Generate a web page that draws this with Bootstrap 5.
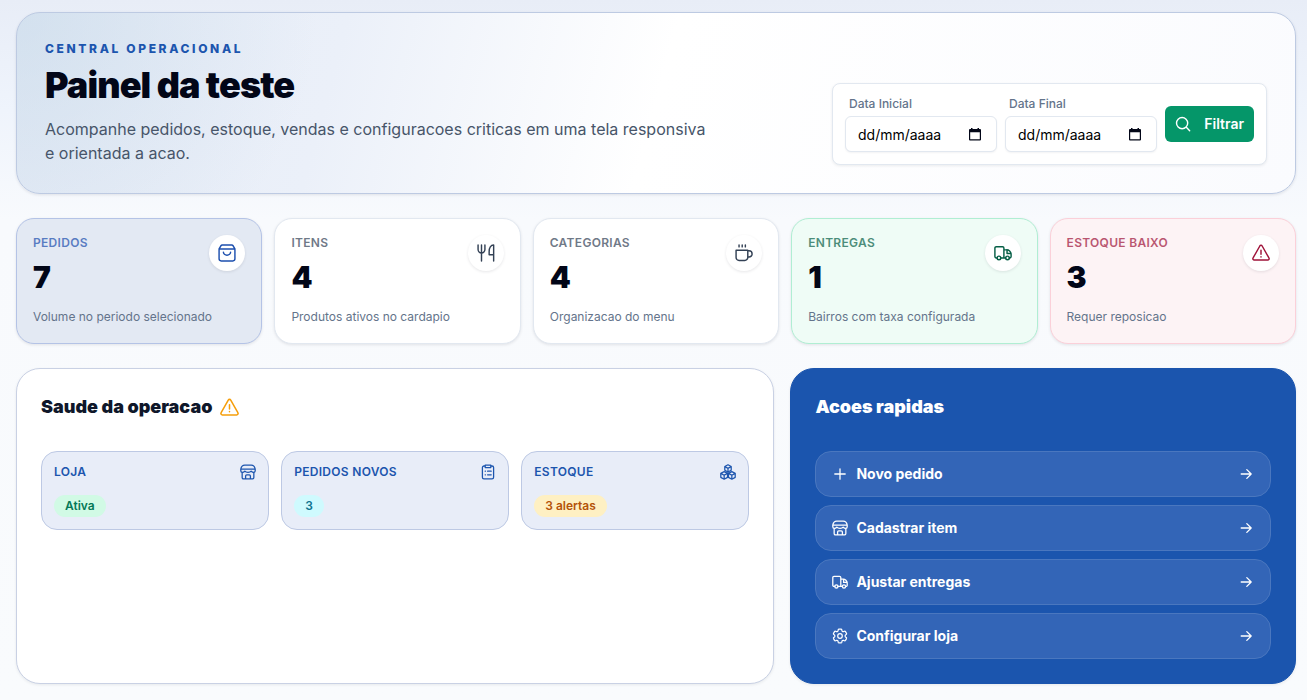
<!DOCTYPE html>
<html lang="pt-BR">
<head>
<meta charset="utf-8">
<meta name="viewport" content="width=device-width, initial-scale=1">
<title>Painel da teste</title>
<link href="https://cdn.jsdelivr.net/npm/bootstrap@5.3.0/dist/css/bootstrap.min.css" rel="stylesheet">
<style>
  body { font-family: Inter, "Liberation Sans", sans-serif; color: #020617; min-height: 100vh;
    background: #f9fbfd linear-gradient(#e8edf7 0, #eff4fc 110px, #f8fafd 220px, #f9fbfd 100%) no-repeat; }
  .page { padding: 12px 11px 16px 16px; }
  .ico { fill: none; stroke: currentColor; stroke-width: 1.6; stroke-linecap: round; stroke-linejoin: round; flex: none; }
  .hero { border: 1px solid #bdcae2; border-radius: 24px; padding: 28px;
    background: radial-gradient(circle at 0 0, rgba(196,216,232,.55), rgba(196,216,232,0) 300px),
      linear-gradient(105deg, #e5ebf6 0, #ebf0f9 25%, #fff 50%, #fafbfe 100%);
    box-shadow: 0 1px 3px rgba(15,23,42,.1); }
  .eyebrow { font-size: 12px; line-height: 16px; font-weight: 800; letter-spacing: .22em; color: #1c55ae; }
  .hero-title { font-size: 36px; line-height: 40px; font-weight: 900; letter-spacing: -.025em; }
  .hero-text { font-size: 16px; line-height: 24px; color: #475569; max-width: 672px; margin-top: 12px; }
  .filter { background: #fff; border: 1px solid #e2e8f0; border-radius: 8px; padding: 12px; box-shadow: 0 1px 3px rgba(15,23,42,.08); }
  .filter label { font-size: 12px; line-height: 16px; color: #64748b; font-weight: 500; padding-left: 4px; }
  .date-box { width: 152px; }
  .date-box .form-control { height: 36px; font-size: 14px; line-height: 20px; padding: 0 12px; border: 1px solid #e2e8f0; border-radius: 6px; box-shadow: 0 1px 2px rgba(15,23,42,.05); }
  .date-box .form-control::placeholder { color: #000; opacity: 1; }
  .date-box svg { right: 16px; top: 12px; pointer-events: none; }
  .btn-filter { height: 36px; width: 89px; padding: 0 10px; border-radius: 6px; font-size: 14px; line-height: 20px; font-weight: 600; color: #fff; background: #059669; }
  .btn-filter:hover { background: #047857; color: #fff; }
  .stats { --bs-gutter-x: 12px; --bs-gutter-y: 12px; }
  .stat { border: 1px solid #e2e8f0; border-radius: 18px; padding: 16px 16px 18px; height: 126px; background: #fff; box-shadow: 0 1px 3px rgba(15,23,42,.1); color: #334155; }
  .stat-name { font-size: 12px; line-height: 16px; font-weight: 600; letter-spacing: .025em; opacity: .7; }
  .stat-value { font-size: 30px; line-height: 36px; font-weight: 900; color: #020617; }
  .stat-note { font-size: 12px; line-height: 16px; color: #64748b; }
  .stat-icon { width: 36px; height: 36px; border-radius: 50%; background: #fff; box-shadow: 0 1px 3px rgba(15,23,42,.1); }
  .stat-blue { background: #e3e9f3; border-color: #b4c3e6; color: #1c4fae; }
  .stat-green { background: #effcf6; border-color: #b0eed3; color: #065f46; }
  .stat-red { background: #fdf3f5; border-color: #fbd0d9; color: #9f1239; }
  .panels { display: grid; grid-template-columns: 3fr 2fr; gap: 16px; }
  .panel { border: 1px solid #c9d1e4; border-radius: 24px; padding: 24px; background: #fff; box-shadow: 0 1px 3px rgba(15,23,42,.08); }
  .panel h2 { font-size: 18px; line-height: 28px; font-weight: 900; margin-bottom: 30px; color: #0f172a; }
  .panel-blue { background: #1b55ae; border-color: #1b55ae; }
  .panel-blue h2 { color: #fff; }
  .health { display: grid; grid-template-columns: repeat(3, 1fr); gap: 12px; color: #1c55ae; }
  .tile { border: 1px solid #bdc9e4; border-radius: 16px; padding: 12px; background: #e8edf8; }
  .tile-name { font-size: 12px; line-height: 16px; font-weight: 600; letter-spacing: .025em; }
  .tile-state { display: flex; margin-top: 15px; }
  .pill { border-radius: 11px; padding: 3px 11px; font-size: 12px; line-height: 16px; font-weight: 600; }
  .pill-green { background: #d1fae5; color: #047857; }
  .pill-cyan { background: #cffafe; color: #0e7490; }
  .pill-amber { background: #fef0c3; color: #b45309; }
  .action { height: 46px; border: 1px solid #4a77bf; border-radius: 16px; padding: 0 16px; background: #3365b7; color: #fff; font-size: 14px; line-height: 20px; font-weight: 700; text-decoration: none; }
  .action:hover { background: #4071c0; }
  @media (max-width: 991px) { .panels, .health { grid-template-columns: 1fr; } }
</style>
</head>
<body>
<svg class="d-none" aria-hidden="true">
  <symbol id="bag" viewBox="0 0 20 20"><path d="M1.200 5.500h17.600M1.200 5.500v11a2.300 2.300 0 0 0 2.300 2.300h13a2.300 2.300 0 0 0 2.300-2.300v-11L16.800 2a2 2 0 0 0-1.500-.8H4.700A2 2 0 0 0 3.200 2zM6 9a4 3.500 0 0 0 8 0"/></symbol>
  <symbol id="cutlery" viewBox="0 0 20 20"><path d="M1.200 1.200v5a3.800 3.800 0 0 0 7.600 0v-5M5 1.200v17.600M18.500 18.800V1.200c-3.200 0-5 3-5 7V12h5"/></symbol>
  <symbol id="cup" viewBox="0 0 20 20"><path d="M1.200 7h13v8a3.300 3.300 0 0 1-3.300 3.300H4.500A3.300 3.300 0 0 1 1.200 15zM14.200 7.500h1.300a3.500 3.500 0 0 1 0 7h-1.300M4.500 1.200v2M8 1.200v2M11.500 1.200v2"/></symbol>
  <symbol id="truck" viewBox="0 0 20 20"><path d="M3.500 15.500H2.500a1.500 1.500 0 0 1-1.500-1.500V4.500A1.500 1.500 0 0 1 2.500 3h7A1.500 1.500 0 0 1 11 4.500v11H7.500M11 6.500h2.500a5 5 0 0 1 5.500 5V14a1.500 1.500 0 0 1-1.500 1.500H17M11 15.500h2M14.500 7v3.500H19"/><circle cx="5.500" cy="15.500" r="2"/><circle cx="15" cy="15.500" r="2"/></symbol>
  <symbol id="warn" viewBox="0 0 20 20"><path d="M8.700 2.200 1.200 15.500a1.500 1.500 0 0 0 1.300 2.300h15a1.500 1.500 0 0 0 1.300-2.300L11.300 2.200a1.500 1.500 0 0 0-2.600 0zM10 7v4.500M10 14.200v.3"/></symbol>
  <symbol id="store" viewBox="0 0 20 20"><path d="M1 6.500C1.500 3.500 3.500 1.500 6 1.500h8c2.500 0 4.500 2 5 5zM1 6.500v2a2 2 0 0 0 2 2c1.500 0 2.500-1 3-1.500.7.900 1.500 1.500 4 1.500s3.300-.6 4-1.500c.5.500 1.500 1.500 3 1.500a2 2 0 0 0 2-2v-2M2.700 10.500V17a1.500 1.500 0 0 0 1.500 1.500h11.600a1.500 1.500 0 0 0 1.500-1.500v-6.500M7 18.500V15a1.500 1.500 0 0 1 1.500-1.500h3A1.500 1.500 0 0 1 13 15v3.500"/></symbol>
  <symbol id="clip" viewBox="0 0 20 20"><path d="M6.500 2.500H5A2 2 0 0 0 3 4.500v12a2 2 0 0 0 2 2h10a2 2 0 0 0 2-2v-12a2 2 0 0 0-2-2h-1.500M6.500 1.500h7v3h-7zM6.500 9h.3M6.500 13.500h.3M9.500 9H14M9.500 13.500H14"/></symbol>
  <symbol id="cubes" viewBox="0 0 20 20"><path d="m10 1 4 2.200v4.600L10 10 6 7.800V3.200zM6 3.200l4 2.300 4-2.300M10 5.500V10M5.200 9.500l4.200 2.200v5L5.200 19 1 16.700v-5zM1 11.700l4.200 2.300 4.200-2.300M5.200 14v5M14.800 9.500l4.200 2.200v5L14.800 19l-4.200-2.300v-5zM10.600 11.700l4.200 2.300 4.200-2.300M14.800 14v5"/></symbol>
  <symbol id="plus" viewBox="0 0 20 20"><path d="M10 3.500v13M3.500 10h13"/></symbol>
  <symbol id="gear" viewBox="1.500 1.500 21 21"><path d="M9.600 3.900c.1-.5.600-.900 1.100-.900h2.600c.5 0 1 .4 1.100.9l.2 1.300c.1.400.3.700.6.900l.3.100c.300.200.700.200 1.100.1l1.200-.5c.500-.2 1.100 0 1.400.5l1.300 2.200c.300.500.200 1.100-.3 1.400l-1 .9c-.3.200-.4.600-.4 1v.4c0 .4.100.7.400 1l1 .8c.4.400.5 1 .3 1.400l-1.300 2.300c-.3.500-.900.700-1.400.5l-1.200-.5c-.4-.1-.8-.1-1.100.1l-.3.100c-.3.200-.5.500-.6.900l-.2 1.300c-.1.500-.6.900-1.100.9h-2.600c-.5 0-1-.4-1.100-.9l-.2-1.300c-.1-.4-.3-.7-.6-.9l-.3-.1c-.3-.2-.7-.2-1.100-.1l-1.200.5c-.5.200-1.100 0-1.400-.5l-1.300-2.300c-.2-.4-.1-1 .3-1.400l1-.8c.3-.3.400-.6.400-1v-.4c0-.4-.1-.8-.4-1l-1-.9c-.5-.3-.6-.9-.3-1.400l1.300-2.200c.3-.5.900-.7 1.400-.5l1.200.5c.4.100.8.100 1.100-.1l.3-.1c.3-.2.5-.5.600-.9z"/><circle cx="12" cy="12" r="3"/></symbol>
  <symbol id="arrow" viewBox="0 0 20 20"><path d="M4 10h12.500M11 4.500l5.500 5.500-5.500 5.500"/></symbol>
  <symbol id="cal" viewBox="0 0 12 13"><path fill="currentColor" stroke="none" fill-rule="evenodd" d="M2 0h1.500v1h5V0H10v1h1a1 1 0 0 1 1 1v9.500a1 1 0 0 1-1 1H1a1 1 0 0 1-1-1V2a1 1 0 0 1 1-1h1zM1.200 4.200v7h9.600v-7z"/></symbol>
</svg>

<main class="page d-flex flex-column gap-4">
  <section class="hero d-flex flex-wrap flex-lg-nowrap justify-content-between align-items-end gap-3">
    <div>
      <div class="eyebrow">CENTRAL OPERACIONAL</div>
      <h1 class="hero-title mt-2 mb-0">Painel da teste</h1>
      <p class="hero-text mb-0">Acompanhe pedidos, estoque, vendas e configuracoes criticas em uma tela responsiva e orientada a acao.</p>
    </div>
    <form class="filter d-flex align-items-center gap-2">
      <div class="date-box d-flex flex-column gap-1">
        <label for="ini">Data Inicial</label>
        <div class="position-relative"><input id="ini" type="text" class="form-control" placeholder="dd/mm/aaaa"><svg class="ico position-absolute" width="12" height="13"><use href="#cal"/></svg></div>
      </div>
      <div class="date-box d-flex flex-column gap-1">
        <label for="fim">Data Final</label>
        <div class="position-relative"><input id="fim" type="text" class="form-control" placeholder="dd/mm/aaaa"><svg class="ico position-absolute" width="12" height="13"><use href="#cal"/></svg></div>
      </div>
      <button type="button" class="btn btn-filter border-0 d-flex align-items-center justify-content-between"><svg class="ico" width="16" height="16" viewBox="0 0 18 18"><circle cx="8" cy="8" r="6.300"/><path d="m13 13 3.500 3.500"/></svg>Filtrar</button>
    </form>
  </section>

  <section class="row row-cols-2 row-cols-md-3 row-cols-lg-5 stats">
    <div class="col"><article class="stat stat-blue d-flex flex-column justify-content-between">
      <div class="d-flex justify-content-between align-items-start"><div><div class="stat-name">PEDIDOS</div><div class="stat-value mt-2">7</div></div>
      <span class="stat-icon d-flex align-items-center justify-content-center"><svg class="ico" width="18" height="18"><use href="#bag"/></svg></span></div>
      <div class="stat-note">Volume no periodo selecionado</div></article></div>
    <div class="col"><article class="stat d-flex flex-column justify-content-between">
      <div class="d-flex justify-content-between align-items-start"><div><div class="stat-name">ITENS</div><div class="stat-value mt-2">4</div></div>
      <span class="stat-icon d-flex align-items-center justify-content-center"><svg class="ico" width="18" height="18"><use href="#cutlery"/></svg></span></div>
      <div class="stat-note">Produtos ativos no cardapio</div></article></div>
    <div class="col"><article class="stat d-flex flex-column justify-content-between">
      <div class="d-flex justify-content-between align-items-start"><div><div class="stat-name">CATEGORIAS</div><div class="stat-value mt-2">4</div></div>
      <span class="stat-icon d-flex align-items-center justify-content-center"><svg class="ico" width="18" height="18"><use href="#cup"/></svg></span></div>
      <div class="stat-note">Organizacao do menu</div></article></div>
    <div class="col"><article class="stat stat-green d-flex flex-column justify-content-between">
      <div class="d-flex justify-content-between align-items-start"><div><div class="stat-name">ENTREGAS</div><div class="stat-value mt-2">1</div></div>
      <span class="stat-icon d-flex align-items-center justify-content-center"><svg class="ico" width="18" height="18"><use href="#truck"/></svg></span></div>
      <div class="stat-note">Bairros com taxa configurada</div></article></div>
    <div class="col"><article class="stat stat-red d-flex flex-column justify-content-between">
      <div class="d-flex justify-content-between align-items-start"><div><div class="stat-name">ESTOQUE BAIXO</div><div class="stat-value mt-2">3</div></div>
      <span class="stat-icon d-flex align-items-center justify-content-center"><svg class="ico" width="18" height="18"><use href="#warn"/></svg></span></div>
      <div class="stat-note">Requer reposicao</div></article></div>
  </section>

  <div class="panels">
    <section class="panel">
      <h2 class="d-flex align-items-center gap-2">Saude da operacao <svg class="ico" width="19" height="19" color="#f59e0b"><use href="#warn"/></svg></h2>
      <div class="health">
        <div class="tile"><div class="d-flex justify-content-between"><span class="tile-name">LOJA</span><svg class="ico" width="16" height="16"><use href="#store"/></svg></div><div class="tile-state"><span class="pill pill-green">Ativa</span></div></div>
        <div class="tile"><div class="d-flex justify-content-between"><span class="tile-name">PEDIDOS NOVOS</span><svg class="ico" width="16" height="16"><use href="#clip"/></svg></div><div class="tile-state"><span class="pill pill-cyan">3</span></div></div>
        <div class="tile"><div class="d-flex justify-content-between"><span class="tile-name">ESTOQUE</span><svg class="ico" width="16" height="16"><use href="#cubes"/></svg></div><div class="tile-state"><span class="pill pill-amber">3 alertas</span></div></div>
      </div>
    </section>
    <section class="panel panel-blue">
      <h2>Acoes rapidas</h2>
      <nav class="d-flex flex-column gap-2">
        <a href="#" class="action d-flex align-items-center gap-2"><svg class="ico" width="16" height="16"><use href="#plus"/></svg>Novo pedido<svg class="ico ms-auto" width="16" height="16"><use href="#arrow"/></svg></a>
        <a href="#" class="action d-flex align-items-center gap-2"><svg class="ico" width="16" height="16"><use href="#store"/></svg>Cadastrar item<svg class="ico ms-auto" width="16" height="16"><use href="#arrow"/></svg></a>
        <a href="#" class="action d-flex align-items-center gap-2"><svg class="ico" width="16" height="16"><use href="#truck"/></svg>Ajustar entregas<svg class="ico ms-auto" width="16" height="16"><use href="#arrow"/></svg></a>
        <a href="#" class="action d-flex align-items-center gap-2"><svg class="ico" width="16" height="16"><use href="#gear"/></svg>Configurar loja<svg class="ico ms-auto" width="16" height="16"><use href="#arrow"/></svg></a>
      </nav>
    </section>
  </div>
</main>
<script src="https://cdn.jsdelivr.net/npm/bootstrap@5.3.0/dist/js/bootstrap.bundle.min.js"></script>
</body>
</html>
